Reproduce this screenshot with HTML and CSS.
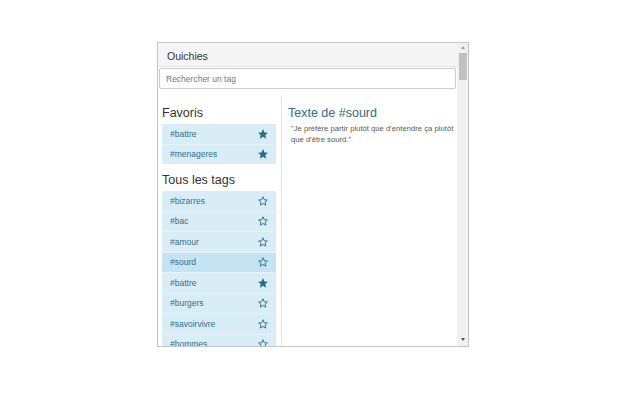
FILE: index.html
```html
<!DOCTYPE html>
<html lang="fr">
<head>
<meta charset="utf-8">
<title>Ouichies</title>
<link rel="stylesheet" href="styles.css">
</head>
<body>
<div class="popup">
  <div class="main">
    <div class="header">Ouichies</div>
    <div class="search"><input type="text" placeholder="Rechercher un tag"></div>
    <div class="columns">
      <div class="left">
        <h3 class="title">Favoris</h3>
        <ul class="list">
          <li class="item"><span>#battre</span><svg class="star" viewBox="0 0 24 24"><path class="full" d="M12 2l2.9 6.9 7.1.6-5.4 4.7 1.7 7.1L12 17.6 5.7 21.3l1.7-7.1L2 9.5l7.1-.6z"/></svg></li>
          <li class="item"><span>#menageres</span><svg class="star" viewBox="0 0 24 24"><path class="full" d="M12 2l2.9 6.9 7.1.6-5.4 4.7 1.7 7.1L12 17.6 5.7 21.3l1.7-7.1L2 9.5l7.1-.6z"/></svg></li>
        </ul>
        <h3 class="title second">Tous les tags</h3>
        <ul class="list">
          <li class="item"><span>#bizarres</span><svg class="star" viewBox="0 0 24 24"><path class="empty" d="M12 3.5l2.5 6 6.3.5-4.8 4.1 1.5 6.2L12 17 6.5 20.3 8 14.1 3.2 10l6.3-.5z"/></svg></li>
          <li class="item"><span>#bac</span><svg class="star" viewBox="0 0 24 24"><path class="empty" d="M12 3.5l2.5 6 6.3.5-4.8 4.1 1.5 6.2L12 17 6.5 20.3 8 14.1 3.2 10l6.3-.5z"/></svg></li>
          <li class="item"><span>#amour</span><svg class="star" viewBox="0 0 24 24"><path class="empty" d="M12 3.5l2.5 6 6.3.5-4.8 4.1 1.5 6.2L12 17 6.5 20.3 8 14.1 3.2 10l6.3-.5z"/></svg></li>
          <li class="item active"><span>#sourd</span><svg class="star" viewBox="0 0 24 24"><path class="empty" d="M12 3.5l2.5 6 6.3.5-4.8 4.1 1.5 6.2L12 17 6.5 20.3 8 14.1 3.2 10l6.3-.5z"/></svg></li>
          <li class="item"><span>#battre</span><svg class="star" viewBox="0 0 24 24"><path class="full" d="M12 2l2.9 6.9 7.1.6-5.4 4.7 1.7 7.1L12 17.6 5.7 21.3l1.7-7.1L2 9.5l7.1-.6z"/></svg></li>
          <li class="item"><span>#burgers</span><svg class="star" viewBox="0 0 24 24"><path class="empty" d="M12 3.5l2.5 6 6.3.5-4.8 4.1 1.5 6.2L12 17 6.5 20.3 8 14.1 3.2 10l6.3-.5z"/></svg></li>
          <li class="item"><span>#savoirvivre</span><svg class="star" viewBox="0 0 24 24"><path class="empty" d="M12 3.5l2.5 6 6.3.5-4.8 4.1 1.5 6.2L12 17 6.5 20.3 8 14.1 3.2 10l6.3-.5z"/></svg></li>
          <li class="item"><span>#hommes</span><svg class="star" viewBox="0 0 24 24"><path class="empty" d="M12 3.5l2.5 6 6.3.5-4.8 4.1 1.5 6.2L12 17 6.5 20.3 8 14.1 3.2 10l6.3-.5z"/></svg></li>
        </ul>
      </div>
      <div class="right">
        <h3 class="title text-title">Texte de #sourd</h3>
        <p class="quote">"Je préfère partir plutôt que d'entendre ça plutôt que d'être sourd."</p>
      </div>
    </div>
  </div>
  <div class="scrollbar">
    <div class="arrow up"></div>
    <div class="thumb"></div>
    <div class="track"></div>
    <div class="arrow down"></div>
  </div>
</div>
</body>
</html>
```
FILE: styles.css
```css
html, body {
  margin: 0;
  padding: 0;
  background: #ffffff;
}
body {
  font-family: "Liberation Sans", Arial, Helvetica, sans-serif;
  color: #333333;
  padding: 42px 0 0 157px;
}
.popup {
  width: 310px;
  height: 303px;
  border: 1px solid #c6c6c6;
  display: flex;
  background: #ffffff;
  overflow: hidden;
}
.main {
  flex: 1;
  display: flex;
  flex-direction: column;
  min-width: 0;
}
.header {
  height: 24px;
  background: #f5f5f5;
  border-bottom: 1px solid #e3e3e3;
  box-sizing: border-box;
  padding: 0 0 0 9px;
  font-size: 10.5px;
  line-height: 27px;
  color: #333333;
}
.search {
  padding: 1px 1px 0 1px;
}
.search input {
  display: block;
  width: 100%;
  box-sizing: border-box;
  height: 21px;
  border: 1px solid #cccccc;
  border-radius: 2px;
  padding: 0 6px;
  font-family: "Liberation Sans", Arial, sans-serif;
  font-size: 8.5px;
  color: #555;
  outline: none;
  margin: 0;
}
.search input::placeholder {
  color: #777777;
}
.columns {
  flex: 1;
  display: flex;
  margin-top: 6px;
  min-height: 0;
}
.left {
  width: 124px;
  flex-shrink: 0;
  border-right: 1px solid #e6e6e6;
  padding: 11px 0 0 4px;
  box-sizing: border-box;
  overflow: hidden;
}
.title {
  margin: 0 0 3px 0;
  font-weight: normal;
  font-size: 12.5px;
  line-height: 15px;
  color: #333333;
}
.title.second {
  margin-top: 9px;
}
.list {
  list-style: none;
  margin: 0;
  padding: 0;
  width: 114px;
  border-radius: 2px;
  overflow: hidden;
}
.item {
  height: 19.5px;
  border-bottom: 1px solid #e9f3f9;
  background: #d9edf7;
  color: #31708f;
  font-size: 8.5px;
  display: flex;
  align-items: center;
  justify-content: space-between;
  padding: 0 7px 0 8px;
}
.item:last-child {
  border-bottom: none;
}
.item.active {
  background: #c4e3f3;
}
.star {
  width: 12px;
  height: 12px;
  display: block;
}
.star .full {
  fill: #2b6a8c;
}
.star .empty {
  fill: none;
  stroke: #2b6a8c;
  stroke-width: 1.8;
  stroke-linejoin: miter;
}
.right {
  flex: 1;
  min-width: 0;
  padding: 11px 0 0 6px;
}
.text-title {
  color: #2f6a8a;
  margin-bottom: 2px;
}
.quote {
  margin: 0 0 0 3px;
  font-size: 7.7px;
  line-height: 11px;
  color: #5a5a5a;
}
.scrollbar {
  width: 11px;
  background: #f1f1f1;
  display: flex;
  flex-direction: column;
  align-items: center;
}
.arrow {
  width: 0;
  height: 0;
  border-left: 2.5px solid transparent;
  border-right: 2.5px solid transparent;
}
.arrow.up {
  border-bottom: 3px solid #a3a3a3;
  margin-top: 3px;
}
.arrow.down {
  border-top: 3px solid #505050;
  margin-bottom: 5px;
}
.thumb {
  width: 8px;
  height: 27px;
  background: #c1c1c1;
  margin-top: 4px;
}
.track {
  flex: 1;
}
```
